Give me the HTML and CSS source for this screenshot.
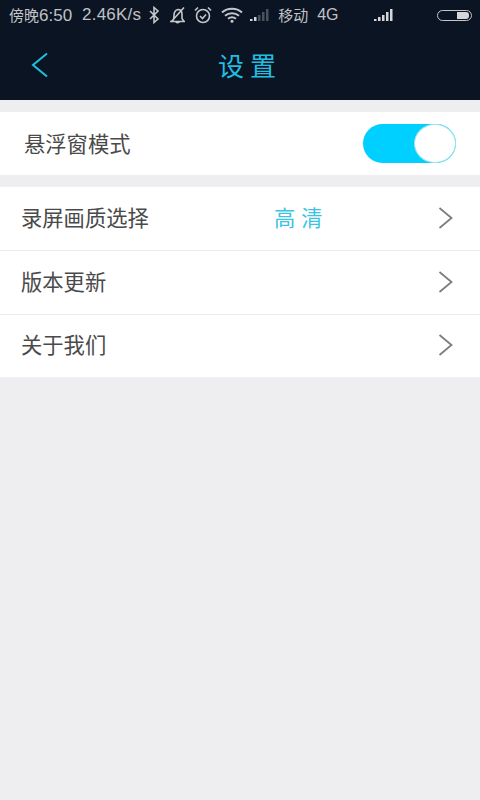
FILE: index.html

```html
<!DOCTYPE html>
<html lang="zh-CN">
<head>
  <meta charset="UTF-8">
  <title>设置</title>
  <link rel="stylesheet" href="styles.css">
</head>
<body>

<header class="top">
  <div class="status">
    <span class="status-time"><span class="cjk">傍晚</span>6:50</span>
    <span class="status-speed">2.46K/s</span>
    <svg class="ic ic-bt" viewBox="0 0 12 18"><path d="M2 5l8 8-4 3.500V1.500L10 5l-8 8"/></svg>
    <svg class="ic ic-bell" viewBox="0 0 18 18"><path d="M1 15.500h15M3.500 15.500c1.500-2 1.500-4 1.500-6 0-3 1.500-5.500 4-6 2.500 0 4 2 4 5v4l2 3M7 15.500c0 1.500 3 1.500 3.500 0M2 16L15 1.500"/></svg>
    <svg class="ic ic-alarm" viewBox="0 0 18 18"><circle cx="9" cy="10" r="6.500"/><path d="M6 10l2.500 2.500L12 8.500M1 4.500L4 1.500M17 4.500L14 1.500"/></svg>
    <svg class="ic ic-wifi" viewBox="0 0 22 16"><path d="M1 5.500C6.500.5 15.500.5 21 5.500M4 8.800c4-3.400 10-3.400 14 0M7 11.800c2.400-1.800 5.600-1.800 8 0"/><circle class="solid" cx="11" cy="14.300" r="1.500"/></svg>
    <svg class="ic-bars ic-bars-weak" viewBox="0 0 20 12"><rect class="on" x="0" y="10" width="2.500" height="2"/><rect class="on" x="4" y="8" width="2.500" height="4"/><rect class="off" x="8" y="6" width="2.500" height="6"/><rect class="off" x="12" y="3" width="2.500" height="9"/><rect class="off" x="16" y="0" width="2.500" height="12"/></svg>
    <span class="status-carrier cjk">移动</span>
    <span class="status-net">4G</span>
    <svg class="ic-bars ic-bars-full" viewBox="0 0 20 12"><rect class="on" x="0" y="10" width="2.500" height="2"/><rect class="on" x="4" y="8" width="2.500" height="4"/><rect class="on" x="8" y="6" width="2.500" height="6"/><rect class="on" x="12" y="3" width="2.500" height="9"/><rect class="on" x="16" y="0" width="2.500" height="12"/></svg>
    <div class="battery"><div class="battery-level"></div></div>
  </div>
  <div class="titlebar">
    <svg class="back" viewBox="0 0 18 26"><path d="M16 1.500L2 13l14 11.500"/></svg>
    <div class="title">设置</div>
  </div>
</header>

<div class="group">
  <div class="row row-float">
    <div class="row-name">悬浮窗模式</div>
    <div class="switch"><div class="switch-knob"></div></div>
  </div>
</div>

<div class="group">
  <div class="row">
    <div class="row-name">录屏画质选择</div>
    <div class="row-value">高清</div>
    <svg class="arrow" viewBox="0 0 15 22"><path d="M1.500 1l12 10-12 10"/></svg>
  </div>
  <div class="row">
    <div class="row-name">版本更新</div>
    <svg class="arrow" viewBox="0 0 15 22"><path d="M1.500 1l12 10-12 10"/></svg>
  </div>
  <div class="row">
    <div class="row-name">关于我们</div>
    <svg class="arrow" viewBox="0 0 15 22"><path d="M1.500 1l12 10-12 10"/></svg>
  </div>
</div>

</body>
</html>
```

FILE: styles.css

```css
html, body {
  height: 100%;
}
body {
  font-family: 'Liberation Sans', 'Noto Sans CJK SC', sans-serif;
  background-color: #eeedf0;
  margin: 0;
  padding: 0;
  color: #4a4a4a;
  overflow: hidden;
}
.top {
  background-color: #0b1423;
  height: 100px;
  display: flex;
  flex-direction: column;
}
.status {
  height: 30px;
  display: flex;
  align-items: center;
  padding: 0 8px 0 9px;
  color: #c0c2c6;
  font-size: 17px;
}
.cjk {
  font-size: 15px;
}
.status-speed {
  margin-left: 10px;
  letter-spacing: 0.2px;
}
.ic {
  fill: none;
  stroke: #c4c6ca;
  stroke-width: 1.6;
}
.ic .solid {
  fill: #c4c6ca;
  stroke: none;
}
.ic-bt {
  width: 12px;
  height: 18px;
  margin-left: 7px;
}
.ic-bell {
  width: 18px;
  height: 18px;
  margin-left: 9px;
}
.ic-alarm {
  width: 18px;
  height: 18px;
  margin-left: 7px;
}
.ic-wifi {
  width: 22px;
  height: 16px;
  margin-left: 9px;
  stroke-width: 2;
}
.ic-bars {
  width: 20px;
  height: 12px;
}
.ic-bars .on {
  fill: #d5d6d9;
}
.ic-bars .off {
  fill: #4b515c;
}
.ic-bars-weak {
  margin-left: 7px;
}
.status-carrier {
  margin-left: 8px;
  margin-bottom: 2px;
}
.status-net {
  margin-left: 9px;
  font-size: 16px;
}
.ic-bars-full {
  margin-left: 35px;
}
.battery {
  width: 29px;
  height: 7px;
  margin-left: auto;
  border: 1.500px solid #c4c6ca;
  border-radius: 6px;
  padding: 1px 2px;
  display: flex;
  justify-content: flex-end;
}
.battery-level {
  width: 12px;
  background-color: #d5d6d9;
  border-radius: 0 3px 3px 0;
}
.titlebar {
  flex: 1;
  position: relative;
  display: flex;
  align-items: center;
  justify-content: center;
}
.back {
  position: absolute;
  left: 31px;
  top: 22px;
  width: 18px;
  height: 26px;
  fill: none;
  stroke: #1fc0e0;
  stroke-width: 2;
}
.title {
  color: #22bde0;
  font-size: 26px;
  letter-spacing: 6px;
  margin-left: 20px;
  margin-bottom: 1px;
}
.group {
  margin-top: 12px;
  background-color: #fff;
}
.row {
  height: 63px;
  display: flex;
  align-items: center;
  padding: 0 27px 0 21px;
  font-size: 21.300px;
  position: relative;
  border-bottom: 1px solid #e9e8eb;
}
.row:last-child {
  border-bottom: none;
  height: 62px;
}
.row-name {
  margin-bottom: 5px;
}
.row.row-float {
  height: 63px;
  padding-left: 24px;
  padding-right: 24px;
  justify-content: space-between;
}
.row-float .row-name {
  margin-bottom: 3px;
}
.row-value {
  position: absolute;
  left: 274px;
  top: 14px;
  color: #3cc3e4;
  letter-spacing: 6px;
}
.arrow {
  width: 15px;
  height: 22px;
  margin-left: auto;
  margin-bottom: 2px;
  fill: none;
  stroke: #7d7d80;
  stroke-width: 1.800;
}
.switch {
  width: 93px;
  height: 39px;
  box-sizing: border-box;
  background-color: #00d0ff;
  border-radius: 20px;
  display: flex;
  justify-content: flex-end;
}
.switch-knob {
  width: 42px;
  height: 39px;
  box-sizing: border-box;
  background-color: #fff;
  border: 1px solid #9fe3ee;
  border-radius: 21px / 20px;
}
```
